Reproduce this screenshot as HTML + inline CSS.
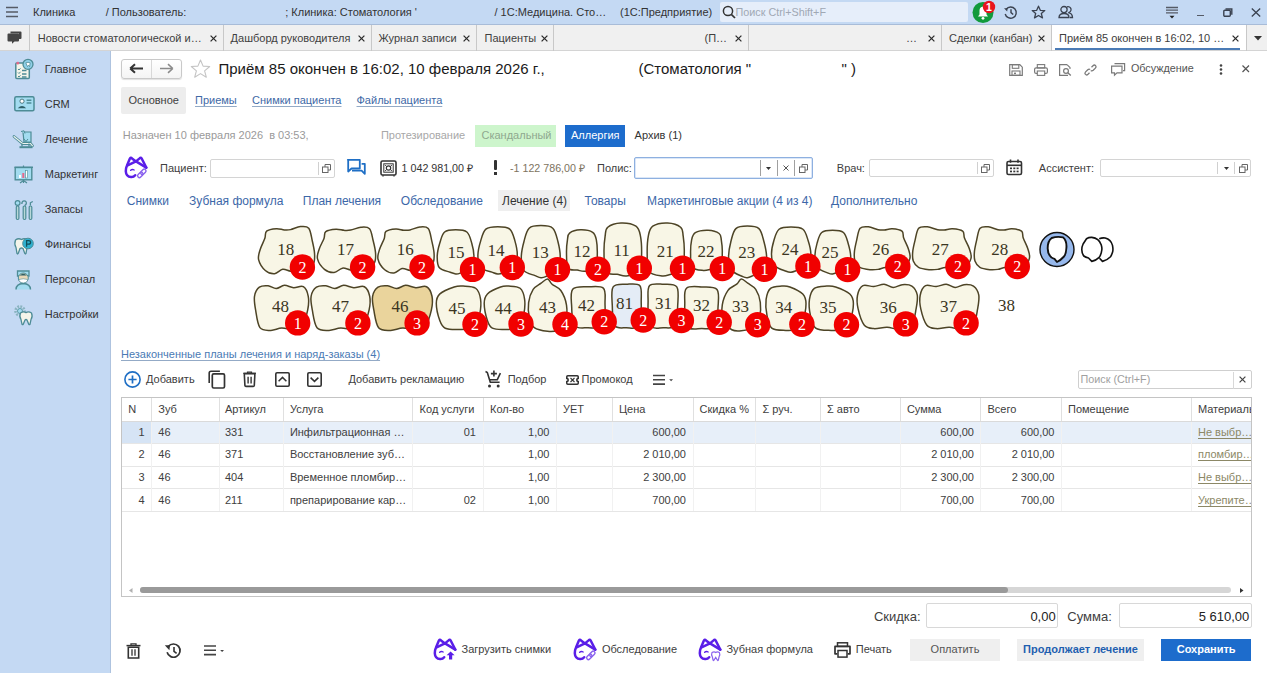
<!DOCTYPE html><html><head><meta charset="utf-8"><style>
html,body{margin:0;padding:0;width:1272px;height:673px;overflow:hidden;background:#fff;position:relative;}
.t{position:absolute;white-space:nowrap;line-height:1;font-family:"Liberation Sans", sans-serif;}
.r{position:absolute;box-sizing:border-box;}
svg.r{overflow:visible}
</style></head><body>
<div class="r" style="left:0.0px;top:0.0px;width:1267.0px;height:25.0px;background:#c4d9f3;border-bottom:1px solid #a8bcd8"></div>
<svg class="r" style="left:5.0px;top:6.0px" width="14" height="12" viewBox="0 0 14 12"><path d="M1 1.5H13M1 6H13M1 10.5H13" stroke="#555b66" stroke-width="1.6"/></svg>
<div class="t " style="left:33.0px;top:7.1px;font-size:11px;color:#333;">Клиника</div>
<div class="t " style="left:105.7px;top:7.1px;font-size:11px;color:#333;">/ Пользователь:</div>
<div class="t " style="left:285.2px;top:7.1px;font-size:11px;color:#333;">; Клиника: Стоматология '</div>
<div class="t " style="left:494.5px;top:7.1px;font-size:11px;color:#333;">/ 1С:Медицина. Сто…</div>
<div class="t " style="left:620.0px;top:7.1px;font-size:11px;color:#333;">(1С:Предприятие)</div>
<div class="r" style="left:719.5px;top:2.0px;width:248.0px;height:20.0px;background:#e6eefa;border-radius:2px"></div>
<svg class="r" style="left:722.0px;top:5.0px" width="14" height="14" viewBox="0 0 14 14"><circle cx="6" cy="6" r="4.6" fill="none" stroke="#333" stroke-width="1.5"/><path d="M9.3 9.3L13 13" stroke="#333" stroke-width="1.7"/></svg>
<div class="t " style="left:735.5px;top:7.2px;font-size:10.8px;color:#a0a8b4;">Поиск Ctrl+Shift+F</div>
<svg class="r" style="left:972.0px;top:1.0px" width="24" height="23" viewBox="0 0 24 23"><circle cx="11" cy="11.5" r="10.5" fill="#119a3c"/><path d="M6 15.5 L7.5 13.5 V9.5 Q7.5 6 11 5.5 Q14.5 6 14.5 9.5 V13.5 L16 15.5Z" fill="#fff"/><circle cx="11" cy="17.3" r="1.4" fill="#fff"/><circle cx="17" cy="6" r="6.2" fill="#e8141e"/><text x="17" y="9.8" font-family="Liberation Sans" font-weight="bold" font-size="10.5" fill="#fff" text-anchor="middle">1</text></svg>
<svg class="r" style="left:1003.0px;top:5.0px" width="15" height="14" viewBox="0 0 15 14"><path d="M3.2 4.2 A5.6 5.6 0 1 1 2.2 9" fill="none" stroke="#3a4250" stroke-width="1.4"/><path d="M1 3.2 L4.6 3.2 L4.2 6.6Z" fill="#3a4250"/><path d="M8 4.3V7.6L10.2 9.6" fill="none" stroke="#3a4250" stroke-width="1.4"/></svg>
<svg class="r" style="left:1031.0px;top:5.0px" width="15" height="14" viewBox="0 0 15 14"><path d="M7.5 1.2 L9.3 5.3 L13.8 5.6 L10.3 8.5 L11.5 12.9 L7.5 10.5 L3.5 12.9 L4.7 8.5 L1.2 5.6 L5.7 5.3Z" fill="none" stroke="#3a4250" stroke-width="1.3" stroke-linejoin="round"/></svg>
<svg class="r" style="left:1058.0px;top:5.0px" width="16" height="14" viewBox="0 0 16 14"><circle cx="6" cy="4.6" r="3.1" fill="none" stroke="#3a4250" stroke-width="1.3"/><path d="M1 12.5 Q1 8.5 6 8.5 Q11 8.5 11 12.5Z" fill="none" stroke="#3a4250" stroke-width="1.3"/><path d="M9 1.8 A3 3 0 1 1 10.2 7.6 Q14.5 8.3 14.5 12.5 H12" fill="none" stroke="#3a4250" stroke-width="1.3"/></svg>
<svg class="r" style="left:1165.0px;top:6.0px" width="14" height="14" viewBox="0 0 14 14"><path d="M1 1.5H13M1 4.2H13M1 6.9H13" stroke="#555b66" stroke-width="1.3"/><path d="M4.5 9.8H9.5L7 12.4Z" fill="#222"/></svg>
<div class="r" style="left:1196.8px;top:14.5px;width:7.0px;height:1.6px;background:#555b66"></div>
<svg class="r" style="left:1223.0px;top:7.5px" width="10" height="9" viewBox="0 0 10 9"><rect x="0.8" y="2.2" width="6.5" height="6" rx="1" fill="none" stroke="#3a4250" stroke-width="1.4"/><path d="M2.5 1 H8.8 V6.8" fill="none" stroke="#3a4250" stroke-width="1.4"/></svg>
<svg class="r" style="left:1250.5px;top:7.5px" width="10" height="9" viewBox="0 0 10 9"><path d="M0.8 0.5L9.2 8.5M9.2 0.5L0.8 8.5" stroke="#3a4250" stroke-width="1.3"/></svg>
<div class="r" style="left:0.0px;top:25.0px;width:1267.0px;height:26.0px;background:#f0f0f0;border-bottom:1px solid #d4d4d4"></div>
<svg class="r" style="left:7.0px;top:31.0px" width="15" height="13" viewBox="0 0 15 13"><path d="M3.5 0.5 H13.5 Q14.5 0.5 14.5 1.5 V7 Q14.5 8 13.5 8 H12 V2.5 H3.5Z" fill="#444"/><path d="M1.5 2.5 H11 Q12 2.5 12 3.5 V9.5 Q12 10.5 11 10.5 H7.5 L5 12.8 V10.5 H1.5 Q0.5 10.5 0.5 9.5 V3.5 Q0.5 2.5 1.5 2.5Z" fill="#444"/></svg>
<div class="r" style="left:29.0px;top:25.0px;width:1.0px;height:26.0px;background:#c8c8c8"></div>
<div class="t " style="left:37.7px;top:32.6px;font-size:11px;color:#404040;">Новости стоматологической и…</div>
<svg class="r" style="left:209.5px;top:34.5px" width="7" height="7" viewBox="0 0 7 7"><path d="M0.6 0.6L6.4 6.4M6.4 0.6L0.6 6.4" stroke="#2a2a2a" stroke-width="1.25"/></svg>
<div class="r" style="left:223.0px;top:25.0px;width:1.0px;height:26.0px;background:#c8c8c8"></div>
<div class="t " style="left:230.6px;top:32.6px;font-size:11px;color:#404040;">Дашборд руководителя</div>
<svg class="r" style="left:357.5px;top:34.5px" width="7" height="7" viewBox="0 0 7 7"><path d="M0.6 0.6L6.4 6.4M6.4 0.6L0.6 6.4" stroke="#2a2a2a" stroke-width="1.25"/></svg>
<div class="r" style="left:371.0px;top:25.0px;width:1.0px;height:26.0px;background:#c8c8c8"></div>
<div class="t " style="left:378.5px;top:32.6px;font-size:11px;color:#404040;">Журнал записи</div>
<svg class="r" style="left:462.5px;top:34.5px" width="7" height="7" viewBox="0 0 7 7"><path d="M0.6 0.6L6.4 6.4M6.4 0.6L0.6 6.4" stroke="#2a2a2a" stroke-width="1.25"/></svg>
<div class="r" style="left:476.0px;top:25.0px;width:1.0px;height:26.0px;background:#c8c8c8"></div>
<div class="t " style="left:484.5px;top:32.6px;font-size:11px;color:#404040;">Пациенты</div>
<svg class="r" style="left:541.0px;top:34.5px" width="7" height="7" viewBox="0 0 7 7"><path d="M0.6 0.6L6.4 6.4M6.4 0.6L0.6 6.4" stroke="#2a2a2a" stroke-width="1.25"/></svg>
<div class="r" style="left:553.0px;top:25.0px;width:1.0px;height:26.0px;background:#c8c8c8"></div>
<div class="t " style="left:704.5px;top:32.6px;font-size:11px;color:#404040;">(П…</div>
<svg class="r" style="left:734.5px;top:34.5px" width="7" height="7" viewBox="0 0 7 7"><path d="M0.6 0.6L6.4 6.4M6.4 0.6L0.6 6.4" stroke="#2a2a2a" stroke-width="1.25"/></svg>
<div class="r" style="left:748.0px;top:25.0px;width:1.0px;height:26.0px;background:#c8c8c8"></div>
<div class="t " style="left:906.0px;top:32.6px;font-size:11px;color:#404040;">…</div>
<svg class="r" style="left:927.5px;top:34.5px" width="7" height="7" viewBox="0 0 7 7"><path d="M0.6 0.6L6.4 6.4M6.4 0.6L0.6 6.4" stroke="#2a2a2a" stroke-width="1.25"/></svg>
<div class="r" style="left:941.0px;top:25.0px;width:1.0px;height:26.0px;background:#c8c8c8"></div>
<div class="t " style="left:949.0px;top:32.6px;font-size:11px;color:#404040;">Сделки (канбан)</div>
<svg class="r" style="left:1037.5px;top:34.5px" width="7" height="7" viewBox="0 0 7 7"><path d="M0.6 0.6L6.4 6.4M6.4 0.6L0.6 6.4" stroke="#2a2a2a" stroke-width="1.25"/></svg>
<div class="r" style="left:1051.0px;top:25.0px;width:1.0px;height:26.0px;background:#c8c8c8"></div>
<div class="r" style="left:1052.0px;top:25.0px;width:193.5px;height:25.0px;background:#fff"></div>
<div class="r" style="left:1055.0px;top:47.5px;width:184.5px;height:2.0px;background:#4b7bb5"></div>
<div class="t " style="left:1059.0px;top:32.6px;font-size:11px;color:#404040;">Приём 85 окончен в 16:02, 10 …</div>
<svg class="r" style="left:1232.0px;top:34.5px" width="7" height="7" viewBox="0 0 7 7"><path d="M0.6 0.6L6.4 6.4M6.4 0.6L0.6 6.4" stroke="#2a2a2a" stroke-width="1.25"/></svg>
<div class="r" style="left:1245.5px;top:25.0px;width:1.0px;height:26.0px;background:#c8c8c8"></div>
<svg class="r" style="left:1254.0px;top:35.5px" width="8" height="5" viewBox="0 0 8 5"><path d="M0 0H8L4 4.5Z" fill="#333"/></svg>
<div class="r" style="left:0.0px;top:51.0px;width:111.0px;height:622.0px;background:#c4d9f3;border-right:1px solid #aec3df"></div>
<div class="t " style="left:44.7px;top:63.6px;font-size:11px;color:#333;">Главное</div>
<div class="t " style="left:44.7px;top:98.6px;font-size:11px;color:#333;">CRM</div>
<div class="t " style="left:44.7px;top:133.6px;font-size:11px;color:#333;">Лечение</div>
<div class="t " style="left:44.7px;top:168.6px;font-size:11px;color:#333;">Маркетинг</div>
<div class="t " style="left:44.7px;top:203.6px;font-size:11px;color:#333;">Запасы</div>
<div class="t " style="left:44.7px;top:238.6px;font-size:11px;color:#333;">Финансы</div>
<div class="t " style="left:44.7px;top:273.6px;font-size:11px;color:#333;">Персонал</div>
<div class="t " style="left:44.7px;top:308.6px;font-size:11px;color:#333;">Настройки</div>
<svg class="r" style="left:15.0px;top:60.5px" width="21" height="21" viewBox="0 0 21 21"><rect x="0.8" y="2" width="13.5" height="15.5" rx="1" fill="#f4f5ea" stroke="#4d8c96" stroke-width="1.5"/><path d="M3 8L4 9L5.5 7.3M3 11.5L4 12.5L5.5 10.8M3 15L4 16L5.5 14.3" fill="none" stroke="#4d8c96" stroke-width="1"/><path d="M7 9.5H11.5M7 13H11.5M7 16H11.5" stroke="#4d8c96" stroke-width="1.3"/><circle cx="2.8" cy="2.2" r="1.4" fill="#e06a8a"/><circle cx="13" cy="3.3" r="5" fill="#8fd0e8" stroke="#4d8c96" stroke-width="1.3"/><path d="M10.8 1.8Q13 0.8 15.2 1.8L14.6 5.6L13.5 4.3L12.5 5.6Z" fill="#fff" stroke="#4d8c96" stroke-width="0.8"/></svg>
<svg class="r" style="left:13.5px;top:96.2px" width="21" height="21" viewBox="0 0 21 21"><rect x="0.8" y="0.8" width="19.2" height="14" rx="1.5" fill="#a3dcf0" stroke="#4d8c96" stroke-width="1.5"/><circle cx="8" cy="5.2" r="2.1" fill="#fff" stroke="#2d5e66" stroke-width="0.8"/><path d="M3.8 12.3Q8 7.6 12.2 12.3Z" fill="#2d5e66"/><path d="M12.6 4.2H17.4M12.6 7H17.4" stroke="#4d8c96" stroke-width="1.4"/></svg>
<svg class="r" style="left:13.0px;top:130.0px" width="21" height="21" viewBox="0 0 21 21"><path d="M1 6.5L9.5 13.5H17.5L19.5 15.8" fill="none" stroke="#4d8c96" stroke-width="2.8" stroke-linecap="round"/><path d="M1 6.5L9.5 13.5H17.5L19.5 15.8" fill="none" stroke="#eef4ee" stroke-width="1.1" stroke-linecap="round"/><path d="M10 2H18V12H11Z" fill="#a3dcf0" stroke="#4d8c96" stroke-width="1.2"/><path d="M8 1.5L11 0.8L12 3.5" fill="#a3dcf0" stroke="#4d8c96" stroke-width="1"/><path d="M11 9L13 11.5L15 9" fill="none" stroke="#4d8c96" stroke-width="1"/><rect x="6.5" y="16.2" width="13" height="2" fill="#4d8c96"/><path d="M9 13.5V16.5M16 13.5V16.5" stroke="#4d8c96" stroke-width="1.3"/></svg>
<svg class="r" style="left:13.5px;top:165.0px" width="21" height="21" viewBox="0 0 21 21"><path d="M0.5 2.3H19" stroke="#4d8c96" stroke-width="1.4"/><rect x="1.2" y="2.5" width="16.6" height="12.3" fill="#a3dcf0" stroke="#4d8c96" stroke-width="1.4"/><rect x="5" y="10" width="2" height="3" fill="#fff"/><rect x="8.3" y="8" width="2" height="5" fill="#e46a8c"/><rect x="11.6" y="5.5" width="2" height="7.5" fill="#fff" stroke="#4d8c96" stroke-width="0.6"/><path d="M9.5 0.5V2.3M9.5 15V18M6 18L9.5 15.5L13 18" fill="none" stroke="#4d8c96" stroke-width="1.2"/></svg>
<svg class="r" style="left:13.5px;top:199.5px" width="21" height="21" viewBox="0 0 21 21"><circle cx="3.6" cy="3" r="2.4" fill="#a3dcf0" stroke="#4d8c96" stroke-width="1.2"/><rect x="2.3" y="6" width="2.6" height="13.5" rx="1.2" fill="#b8d8d8" stroke="#4d8c96" stroke-width="1.2"/><path d="M7.8 4Q8 0.8 10.2 0.9Q12.6 1 12.3 3.5Q12 5 10.6 5.6" fill="none" stroke="#4d8c96" stroke-width="1.3"/><rect x="9.2" y="6" width="2.6" height="13.5" rx="1.2" fill="#b8d8d8" stroke="#4d8c96" stroke-width="1.2"/><path d="M16.4 5.5V2.8L18.8 1.5" fill="none" stroke="#4d8c96" stroke-width="1.3"/><rect x="15.2" y="6" width="2.6" height="13.5" rx="1.2" fill="#b8d8d8" stroke="#4d8c96" stroke-width="1.2"/></svg>
<svg class="r" style="left:13.5px;top:236.5px" width="21" height="21" viewBox="0 0 21 21"><path d="M1.5 3Q4.5 0.8 7.5 2.5Q10.5 0.8 13.5 3Q15 7 13 10.5L12 16.5Q11.4 17.5 10.8 16.5L9 11.5Q7.5 10.5 6 11.5L4.2 16.5Q3.6 17.5 3 16.5L2 10.5Q0 7 1.5 3Z" fill="#f4f5ea" stroke="#4d8c96" stroke-width="1.3"/><circle cx="14" cy="6.5" r="5.3" fill="#2fb1d0" stroke="#4d8c96" stroke-width="1"/><path d="M12.6 9.8V3.6H14.6Q16.6 3.6 16.6 5.4Q16.6 7.2 14.6 7.2H12.6" fill="none" stroke="#10505c" stroke-width="1.3"/></svg>
<svg class="r" style="left:14.0px;top:269.5px" width="21" height="21" viewBox="0 0 21 21"><path d="M2 19.5Q2 14 9.2 13.5Q16.5 14 16.5 19.5" fill="#a3dcf0" stroke="#4d8c96" stroke-width="1.4"/><path d="M3.5 1H15V6H3.5Z" fill="#a3dcf0" stroke="#4d8c96" stroke-width="1.3"/><circle cx="9.3" cy="8" r="5" fill="#e8d8b8" stroke="#4d8c96" stroke-width="1"/><path d="M5.5 5.5Q9.3 2 13 5.5" fill="#2d5e66"/><path d="M5 9.5Q9.3 8 13.5 9.5V11Q9.3 15 5 11Z" fill="#fff" stroke="#4d8c96" stroke-width="0.6"/></svg>
<svg class="r" style="left:14.0px;top:305.0px" width="21" height="21" viewBox="0 0 21 21"><circle cx="6" cy="6" r="4.5" fill="none" stroke="#8ab4c0" stroke-width="2.6" stroke-dasharray="1.8 1.2"/><circle cx="6" cy="6" r="2.5" fill="#a3dcf0" stroke="#4d8c96" stroke-width="0.8"/><path d="M6.5 8Q9.5 6 12 7.6Q14.5 6 17.5 8Q19 11.5 17 14.5L16 19.3Q15.4 20 14.8 19.3L13 15Q12 14 11 15L9.2 19.3Q8.6 20 8 19.3L7 14.5Q5 11.5 6.5 8Z" fill="#f4f5ea" stroke="#4d8c96" stroke-width="1.3"/></svg>
<div class="r" style="left:121.0px;top:58.5px;width:60.5px;height:20.0px;border:1px solid #c9c9c9;border-radius:3px;background:linear-gradient(#fff,#f4f4f4);box-shadow:0 1px 1px rgba(0,0,0,0.12)"></div>
<div class="r" style="left:151.2px;top:59.5px;width:1.0px;height:18.0px;background:#d8d8d8"></div>
<svg class="r" style="left:128.5px;top:63.0px" width="15" height="11" viewBox="0 0 15 11"><path d="M1.2 5.5H14M1.2 5.5L6 1.2M1.2 5.5L6 9.8" fill="none" stroke="#333" stroke-width="2"/></svg>
<svg class="r" style="left:159.0px;top:63.0px" width="15" height="11" viewBox="0 0 15 11"><path d="M13.8 5.5H1M13.8 5.5L9 1.2M13.8 5.5L9 9.8" fill="none" stroke="#8a8a8a" stroke-width="1.6"/></svg>
<svg class="r" style="left:190.0px;top:58.5px" width="21" height="19" viewBox="0 0 21 19"><path d="M10.5 1 L13.1 7.1 L19.7 7.5 L14.6 11.8 L16.3 18.2 L10.5 14.6 L4.7 18.2 L6.4 11.8 L1.3 7.5 L7.9 7.1Z" fill="none" stroke="#c4c4c4" stroke-width="1.1" stroke-linejoin="round"/></svg>
<div class="t " style="left:218.5px;top:60.5px;font-size:15px;color:#1a1a1a;">Приём 85 окончен в 16:02, 10 февраля 2026 г.,</div>
<div class="t " style="left:638.5px;top:60.5px;font-size:15px;color:#1a1a1a;">(Стоматология "</div>
<div class="t " style="left:841.5px;top:60.5px;font-size:15px;color:#1a1a1a;">" )</div>
<svg class="r" style="left:1009.0px;top:63.5px" width="14" height="12" viewBox="0 0 14 12"><path d="M0.7 0.7H10.8L13.3 3.2V11.3H0.7Z" fill="none" stroke="#7a7a7a" stroke-width="1.2"/><rect x="3.3" y="0.7" width="6.5" height="3.6" fill="none" stroke="#7a7a7a" stroke-width="1.1"/><rect x="3" y="7" width="8" height="4.3" fill="none" stroke="#7a7a7a" stroke-width="1.1"/><rect x="5" y="8.6" width="2" height="1.5" fill="#7a7a7a"/></svg>
<svg class="r" style="left:1034.0px;top:63.5px" width="14" height="12" viewBox="0 0 14 12"><rect x="3.3" y="0.6" width="7.4" height="3.4" fill="none" stroke="#7a7a7a" stroke-width="1.1"/><rect x="0.6" y="3.8" width="12.8" height="5.6" rx="1.5" fill="none" stroke="#7a7a7a" stroke-width="1.2"/><rect x="3.3" y="7" width="7.4" height="4.4" fill="#fff" stroke="#7a7a7a" stroke-width="1.1"/></svg>
<svg class="r" style="left:1059.0px;top:63.5px" width="13" height="12" viewBox="0 0 13 12"><path d="M8 0.6H0.6V11.4H9" fill="none" stroke="#7a7a7a" stroke-width="1.2"/><path d="M8 0.6 L11 3.6 V5" fill="none" stroke="#7a7a7a" stroke-width="1.1"/><circle cx="7" cy="7" r="2.4" fill="none" stroke="#7a7a7a" stroke-width="1.2"/><path d="M8.8 8.8L11.8 11.6" stroke="#7a7a7a" stroke-width="1.4"/></svg>
<svg class="r" style="left:1083.5px;top:63.5px" width="13" height="12" viewBox="0 0 13 12"><path d="M5.5 8.8 L4 10.3 Q2.6 11.6 1.4 10.4 Q0.3 9.2 1.6 7.9 L3.8 5.7 Q5 4.6 6.2 5.6" fill="none" stroke="#7a7a7a" stroke-width="1.3"/><path d="M7.5 3.2 L9 1.7 Q10.4 0.4 11.6 1.6 Q12.7 2.8 11.4 4.1 L9.2 6.3 Q8 7.4 6.8 6.4" fill="none" stroke="#7a7a7a" stroke-width="1.3"/></svg>
<svg class="r" style="left:1111.0px;top:63.0px" width="15" height="13" viewBox="0 0 15 13"><path d="M3.5 0.6H13.6V7.6H12" fill="none" stroke="#7a7a7a" stroke-width="1.2"/><path d="M0.6 3.2H11V9.8H6L3.5 12.2V9.8H0.6Z" fill="#fff" stroke="#7a7a7a" stroke-width="1.2"/></svg>
<div class="t " style="left:1130.9px;top:63.1px;font-size:10.8px;color:#555;">Обсуждение</div>
<svg class="r" style="left:1218.5px;top:63.5px" width="4" height="11" viewBox="0 0 4 11"><circle cx="2" cy="1.5" r="1.3" fill="#444"/><circle cx="2" cy="5.5" r="1.3" fill="#444"/><circle cx="2" cy="9.5" r="1.3" fill="#444"/></svg>
<svg class="r" style="left:1241.5px;top:65.0px" width="7.5" height="7.5" viewBox="0 0 7.5 7.5"><path d="M0.5 0.5L7 7M7 0.5L0.5 7" stroke="#555" stroke-width="1.2"/></svg>
<div class="r" style="left:121.0px;top:87.0px;width:64.5px;height:27.0px;background:#ededed;border-radius:2px"></div>
<div class="t " style="left:128.5px;top:95.1px;font-size:11px;color:#404040;">Основное</div>
<div class="t " style="left:195.0px;top:95.1px;font-size:11px;color:#4169a6;text-decoration:underline;text-underline-offset:2px;text-decoration-color:#93aac6">Приемы</div>
<div class="t " style="left:252.0px;top:95.1px;font-size:11px;color:#4169a6;text-decoration:underline;text-underline-offset:2px;text-decoration-color:#93aac6">Снимки пациента</div>
<div class="t " style="left:356.5px;top:95.1px;font-size:11px;color:#4169a6;text-decoration:underline;text-underline-offset:2px;text-decoration-color:#93aac6">Файлы пациента</div>
<div class="t " style="left:122.7px;top:130.3px;font-size:11px;color:#9a9a9a;">Назначен 10 февраля 2026&nbsp; в 03:53,</div>
<div class="t " style="left:380.9px;top:130.3px;font-size:11px;color:#a8a8a8;">Протезирование</div>
<div class="r" style="left:475.0px;top:124.5px;width:81.2px;height:22.0px;background:#cdf5cc"></div>
<div class="t " style="left:481.5px;top:130.3px;font-size:11px;color:#8fa88f;">Скандальный</div>
<div class="r" style="left:564.6px;top:124.5px;width:60.1px;height:22.0px;background:#1d6ccc"></div>
<div class="t " style="left:571.0px;top:130.3px;font-size:11px;color:#fff;">Аллергия</div>
<div class="t " style="left:634.6px;top:130.3px;font-size:11px;color:#333;">Архив (1)</div>
<svg class="r" style="left:120.0px;top:152.0px" width="30" height="28" viewBox="0 0 30 28"><path d="M15.2 23.2 Q13.5 25.3 11.1 25 Q6 24.6 5.8 19.2 Q5.8 16.2 6.7 14.2 L9.8 6.8 Q10.7 5 12 6.4 L16 9.4 L19.6 6.4 Q20.9 5 21.8 6.8 L26.3 15.6" fill="none" stroke="#5a1ee8" stroke-width="2.5" stroke-linejoin="round" stroke-linecap="round"/><path d="M7.6 13.3 L16 9.4 L26.3 15.6" fill="none" stroke="#5a1ee8" stroke-width="2.5" stroke-linejoin="round" stroke-linecap="round"/><path d="M10.6 18.3 Q12.3 16.9 14.2 18" fill="none" stroke="#5a1ee8" stroke-width="1.3" stroke-linecap="round"/><g fill="none" stroke="#8a62ee" stroke-width="1.4" transform="rotate(-45 21.8 21.4)"><rect x="16.6" y="19.6" width="6.2" height="3.6" rx="1.8"/><rect x="20.8" y="19.6" width="6.2" height="3.6" rx="1.8"/></g></svg>
<div class="t " style="left:160.0px;top:162.6px;font-size:11px;color:#404040;">Пациент:</div>
<div class="r" style="left:210.0px;top:159.0px;width:125.0px;height:18.5px;border:1px solid #d4d4d4;background:#fff;border-radius:2px"></div>
<div class="r" style="left:317.7px;top:162.0px;width:1.0px;height:12.5px;background:#d0d0d0"></div>
<svg class="r" style="left:322.2px;top:163.8px" width="9" height="9" viewBox="0 0 9 9"><rect x="0.5" y="3" width="5.5" height="5.5" fill="#fff" stroke="#666" stroke-width="1"/><path d="M3 3V0.5H8.5V6H6" fill="none" stroke="#666" stroke-width="1"/></svg>
<svg class="r" style="left:346.5px;top:159.0px" width="19" height="17" viewBox="0 0 19 17"><path d="M0.8 0.8H12.8V9.5H4.5L1.2 12.5V0.8Z" fill="none" stroke="#1f6fc5" stroke-width="1.8" stroke-linejoin="round"/><path d="M5 11.6H14.6L17.8 14.8V4.8H14.6" fill="none" stroke="#1f6fc5" stroke-width="1.8" stroke-linejoin="round"/></svg>
<svg class="r" style="left:379.5px;top:159.5px" width="17" height="17" viewBox="0 0 17 17"><rect x="1" y="1" width="15" height="14" rx="1.5" fill="none" stroke="#333" stroke-width="1.6"/><rect x="3.8" y="3.8" width="9.4" height="8.4" fill="none" stroke="#333" stroke-width="1"/><circle cx="8.5" cy="8" r="2.2" fill="none" stroke="#333" stroke-width="1.2"/><path d="M5 5L6.8 6.6M12 5L10.2 6.6M5 11L6.8 9.4M12 11L10.2 9.4" stroke="#333" stroke-width="0.9"/><path d="M3 15.2V16.5M14 15.2V16.5" stroke="#333" stroke-width="1.4"/></svg>
<div class="t " style="left:401.6px;top:162.8px;font-size:10.7px;color:#333;">1 042 981,00 ₽</div>
<div class="r" style="left:494.3px;top:160.0px;width:3.2px;height:10.0px;background:#333;border-radius:1px"></div>
<div class="r" style="left:494.3px;top:172.0px;width:3.2px;height:3.0px;background:#333"></div>
<div class="t " style="left:510.0px;top:162.8px;font-size:10.7px;color:#7d7360;">-1 122 786,00 ₽</div>
<div class="t " style="left:597.0px;top:162.6px;font-size:11px;color:#404040;">Полис:</div>
<div class="r" style="left:634.3px;top:157.0px;width:179.0px;height:22.3px;border:1px solid #8eb0e0;background:#fff;border-radius:2px;box-shadow:inset 0 0 0 0.5px #b8cff0"></div>
<div class="r" style="left:759.8px;top:160.0px;width:1.0px;height:16.3px;background:#a0a0a0"></div>
<svg class="r" style="left:766.3px;top:167.0px" width="5" height="3.5" viewBox="0 0 5 3.5"><path d="M0 0H5L2.5 3Z" fill="#333"/></svg>
<div class="r" style="left:777.0px;top:160.0px;width:1.0px;height:16.3px;background:#a0a0a0"></div>
<svg class="r" style="left:782.8px;top:165.2px" width="6" height="6" viewBox="0 0 6 6"><path d="M0.5 0.5L5.5 5.5M5.5 0.5L0.5 5.5" stroke="#555" stroke-width="1"/></svg>
<div class="r" style="left:794.3px;top:160.0px;width:1.0px;height:16.3px;background:#a0a0a0"></div>
<svg class="r" style="left:798.8px;top:163.7px" width="9" height="9" viewBox="0 0 9 9"><rect x="0.5" y="3" width="5.5" height="5.5" fill="#fff" stroke="#666" stroke-width="1"/><path d="M3 3V0.5H8.5V6H6" fill="none" stroke="#666" stroke-width="1"/></svg>
<div class="t " style="left:836.8px;top:162.6px;font-size:11px;color:#404040;">Врач:</div>
<div class="r" style="left:868.5px;top:158.7px;width:125.5px;height:18.8px;border:1px solid #d4d4d4;background:#fff;border-radius:2px"></div>
<div class="r" style="left:976.6px;top:161.7px;width:1.0px;height:12.8px;background:#d0d0d0"></div>
<svg class="r" style="left:981.1px;top:163.6px" width="9" height="9" viewBox="0 0 9 9"><rect x="0.5" y="3" width="5.5" height="5.5" fill="#fff" stroke="#666" stroke-width="1"/><path d="M3 3V0.5H8.5V6H6" fill="none" stroke="#666" stroke-width="1"/></svg>
<svg class="r" style="left:1006.0px;top:159.3px" width="17" height="17" viewBox="0 0 17 17"><rect x="1" y="2.5" width="14.5" height="13" rx="1.5" fill="none" stroke="#333" stroke-width="1.6"/><path d="M1 6.3H15.5" stroke="#333" stroke-width="1.6"/><path d="M4.5 0.5V3.8M12 0.5V3.8" stroke="#333" stroke-width="1.6"/><g fill="#333"><rect x="4" y="8.5" width="2" height="1.7"/><rect x="7.3" y="8.5" width="2" height="1.7"/><rect x="10.6" y="8.5" width="2" height="1.7"/><rect x="4" y="11.6" width="2" height="1.7"/><rect x="7.3" y="11.6" width="2" height="1.7"/><rect x="10.6" y="11.6" width="2" height="1.7"/></g></svg>
<div class="t " style="left:1038.8px;top:162.6px;font-size:11px;color:#404040;">Ассистент:</div>
<div class="r" style="left:1099.7px;top:158.7px;width:151.6px;height:18.8px;border:1px solid #d4d4d4;background:#fff;border-radius:2px"></div>
<div class="r" style="left:1217.0px;top:161.7px;width:1.0px;height:12.8px;background:#d0d0d0"></div>
<svg class="r" style="left:1223.5px;top:166.9px" width="5" height="3.5" viewBox="0 0 5 3.5"><path d="M0 0H5L2.5 3Z" fill="#333"/></svg>
<div class="r" style="left:1234.0px;top:161.7px;width:1.0px;height:12.8px;background:#d0d0d0"></div>
<svg class="r" style="left:1238.5px;top:163.6px" width="9" height="9" viewBox="0 0 9 9"><rect x="0.5" y="3" width="5.5" height="5.5" fill="#fff" stroke="#666" stroke-width="1"/><path d="M3 3V0.5H8.5V6H6" fill="none" stroke="#666" stroke-width="1"/></svg>
<div class="t " style="left:126.8px;top:194.6px;font-size:12px;color:#3c67a8;">Снимки</div>
<div class="t " style="left:189.0px;top:194.6px;font-size:12px;color:#3c67a8;">Зубная формула</div>
<div class="t " style="left:302.8px;top:194.6px;font-size:12px;color:#3c67a8;">План лечения</div>
<div class="t " style="left:400.8px;top:194.6px;font-size:12px;color:#3c67a8;">Обследование</div>
<div class="r" style="left:498.0px;top:189.7px;width:72.0px;height:21.7px;background:#efefef"></div>
<div class="t " style="left:502.0px;top:194.6px;font-size:12px;color:#333;">Лечение (4)</div>
<div class="t " style="left:584.5px;top:194.6px;font-size:12px;color:#3c67a8;">Товары</div>
<div class="t " style="left:647.0px;top:194.6px;font-size:12px;color:#3c67a8;">Маркетинговые акции (4 из 4)</div>
<div class="t " style="left:831.0px;top:194.6px;font-size:12px;color:#3c67a8;">Дополнительно</div>
<svg class="r" style="left:0;top:0" width="1272" height="673" viewBox="0 0 1272 673"><path d="M266.59 231.13 C268.52 229.52 273.48 228.88 276.43 228.68 C279.39 228.47 281.96 229.75 284.31 229.90 C286.67 230.06 287.89 230.17 290.57 229.62 C293.26 229.07 297.39 226.84 300.41 226.60 C303.44 226.36 306.77 225.80 308.74 228.16 C310.72 230.52 311.30 236.65 312.26 240.76 C313.22 244.87 314.22 249.22 314.50 252.84 C314.78 256.46 314.87 259.77 313.94 262.47 C313.01 265.18 311.43 267.59 308.91 269.08 C306.39 270.57 301.90 271.09 298.85 271.44 C295.79 271.79 293.28 271.52 290.57 271.16 C287.87 270.79 285.30 268.83 282.64 269.27 C279.97 269.71 277.48 273.60 274.59 273.80 C271.70 274.00 267.97 272.86 265.31 270.50 C262.64 268.14 259.44 263.18 258.60 259.64 C257.76 256.10 259.23 252.80 260.28 249.26 C261.32 245.71 263.81 241.37 264.86 238.35 C265.91 235.33 264.67 232.74 266.59 231.13Z" fill="#f8f6e6" stroke="#4d4426" stroke-width="1.5"/><path d="M325.79 231.55 C327.79 230.00 332.94 229.39 336.00 229.19 C339.07 229.00 341.73 230.22 344.18 230.37 C346.63 230.52 347.89 230.63 350.68 230.10 C353.46 229.57 357.74 227.43 360.88 227.20 C364.03 226.97 367.48 226.43 369.53 228.69 C371.58 230.96 372.18 236.84 373.18 240.79 C374.18 244.74 375.21 248.91 375.50 252.39 C375.79 255.86 375.89 259.03 374.92 261.63 C373.95 264.23 372.31 266.54 369.70 267.97 C367.09 269.40 362.43 269.90 359.26 270.24 C356.09 270.57 353.48 270.31 350.68 269.96 C347.87 269.62 345.20 267.73 342.44 268.15 C339.68 268.57 337.08 272.30 334.09 272.50 C331.09 272.70 327.22 271.59 324.46 269.33 C321.70 267.06 318.37 262.31 317.50 258.91 C316.63 255.51 318.16 252.35 319.24 248.94 C320.32 245.54 322.90 241.38 324.00 238.48 C325.09 235.58 323.79 233.10 325.79 231.55Z" fill="#f8f6e6" stroke="#4d4426" stroke-width="1.5"/><path d="M386.01 231.42 C387.94 229.84 392.91 229.22 395.86 229.02 C398.82 228.82 401.40 230.07 403.76 230.22 C406.12 230.37 407.34 230.48 410.03 229.94 C412.72 229.41 416.85 227.24 419.89 227.00 C422.92 226.76 426.25 226.22 428.23 228.52 C430.21 230.82 430.80 236.79 431.76 240.80 C432.72 244.81 433.72 249.05 434.00 252.58 C434.28 256.10 434.37 259.32 433.44 261.96 C432.51 264.60 430.92 266.94 428.40 268.40 C425.88 269.86 421.38 270.36 418.32 270.70 C415.26 271.04 412.74 270.78 410.03 270.42 C407.33 270.07 404.75 268.15 402.08 268.58 C399.41 269.01 396.91 272.80 394.02 273.00 C391.12 273.20 387.39 272.08 384.72 269.78 C382.05 267.48 378.84 262.65 378.00 259.20 C377.16 255.75 378.63 252.54 379.68 249.08 C380.73 245.62 383.22 241.40 384.27 238.45 C385.33 235.51 384.08 232.99 386.01 231.42Z" fill="#f8f6e6" stroke="#4d4426" stroke-width="1.5"/><path d="M444.62 232.01 C447.28 229.80 452.04 229.80 455.75 229.80 C459.46 229.80 464.22 229.80 466.88 232.01 C469.54 234.22 470.53 239.01 471.70 243.06 C472.88 247.11 473.99 252.27 473.93 256.32 C473.87 260.37 473.62 264.57 471.33 267.37 C469.04 270.17 462.80 272.01 460.20 273.12 C457.61 274.22 457.42 274.15 455.75 274.00 C454.08 273.85 452.91 273.26 450.19 272.23 C447.46 271.20 441.59 270.46 439.43 267.81 C437.26 265.16 437.14 260.45 437.20 256.32 C437.26 252.19 438.56 247.11 439.80 243.06 C441.03 239.01 441.96 234.22 444.62 232.01Z" fill="#f8f6e6" stroke="#4d4426" stroke-width="1.5"/><path d="M485.86 229.06 C488.71 226.70 493.82 226.70 497.80 226.70 C501.78 226.70 506.89 226.70 509.74 229.06 C512.59 231.43 513.65 236.55 514.91 240.89 C516.17 245.23 517.37 250.74 517.30 255.08 C517.24 259.42 516.97 263.91 514.52 266.90 C512.06 269.90 505.36 271.87 502.58 273.05 C499.79 274.24 499.59 274.16 497.80 274.00 C496.01 273.84 494.75 273.21 491.83 272.11 C488.91 271.00 482.61 270.22 480.29 267.38 C477.97 264.54 477.83 259.49 477.90 255.08 C477.97 250.67 479.36 245.23 480.69 240.89 C482.01 236.55 483.01 231.43 485.86 229.06Z" fill="#f8f6e6" stroke="#4d4426" stroke-width="1.5"/><path d="M529.16 228.20 C531.98 225.60 537.02 225.60 540.95 225.60 C544.88 225.60 549.92 225.60 552.74 228.20 C555.56 230.81 556.60 236.45 557.85 241.23 C559.09 246.01 560.27 252.08 560.21 256.86 C560.14 261.64 559.88 266.59 557.46 269.88 C555.03 273.18 548.42 275.36 545.67 276.66 C542.91 277.96 542.72 277.87 540.95 277.70 C539.18 277.53 537.94 276.83 535.05 275.62 C532.17 274.40 525.95 273.53 523.66 270.41 C521.37 267.28 521.23 261.72 521.30 256.86 C521.37 252.00 522.74 246.01 524.05 241.23 C525.36 236.45 526.34 230.81 529.16 228.20Z" fill="#f8f6e6" stroke="#4d4426" stroke-width="1.5"/><path d="M569.58 233.12 C571.74 231.39 576.51 229.94 580.36 229.80 C584.21 229.66 590.01 230.56 592.68 232.29 C595.35 234.02 595.61 236.44 596.38 240.18 C597.15 243.91 597.40 250.07 597.30 254.70 C597.20 259.33 597.81 265.21 595.76 267.98 C593.71 270.75 588.06 270.95 584.98 271.30 C581.90 271.65 580.10 270.61 577.28 270.06 C574.46 269.50 569.84 270.88 568.04 267.98 C566.24 265.08 566.60 257.26 566.50 252.62 C566.40 247.99 566.91 243.43 567.42 240.18 C567.94 236.92 567.42 234.85 569.58 233.12Z" fill="#f8f6e6" stroke="#4d4426" stroke-width="1.5"/><path d="M607.76 227.23 C610.39 225.03 616.22 223.18 620.92 223.00 C625.62 222.82 632.70 223.97 635.96 226.17 C639.22 228.38 639.53 231.46 640.47 236.22 C641.41 240.99 641.73 248.83 641.60 254.74 C641.47 260.65 642.23 268.14 639.72 271.67 C637.21 275.19 630.32 275.46 626.56 275.90 C622.80 276.34 620.61 275.02 617.16 274.31 C613.71 273.61 608.07 275.37 605.88 271.67 C603.69 267.97 604.13 258.00 604.00 252.09 C603.87 246.19 604.50 240.37 605.13 236.22 C605.75 232.08 605.13 229.44 607.76 227.23Z" fill="#f8f6e6" stroke="#4d4426" stroke-width="1.5"/><path d="M683.19 236.22 C683.81 240.37 684.42 246.19 684.30 252.09 C684.18 258.00 684.61 267.97 682.44 271.67 C680.28 275.37 674.72 273.61 671.31 274.31 C667.91 275.02 665.75 276.34 662.04 275.90 C658.33 275.46 651.53 275.19 649.06 271.67 C646.58 268.14 647.32 260.65 647.20 254.74 C647.08 248.83 647.39 240.99 648.31 236.22 C649.24 231.46 649.55 228.38 652.76 226.17 C655.98 223.97 662.97 222.82 667.61 223.00 C672.24 223.18 677.99 225.03 680.59 227.23 C683.19 229.44 682.57 232.08 683.19 236.22Z" fill="#f8f6e6" stroke="#4d4426" stroke-width="1.5"/><path d="M721.35 240.32 C721.88 243.47 722.41 247.88 722.30 252.35 C722.19 256.83 722.56 264.38 720.71 267.19 C718.87 270.00 714.11 268.66 711.20 269.20 C708.30 269.73 706.45 270.73 703.28 270.40 C700.11 270.07 694.30 269.87 692.19 267.19 C690.07 264.52 690.71 258.84 690.60 254.36 C690.49 249.88 690.76 243.93 691.55 240.32 C692.34 236.72 692.61 234.38 695.36 232.71 C698.10 231.04 704.07 230.17 708.03 230.30 C712.00 230.43 716.91 231.84 719.13 233.51 C721.35 235.18 720.82 237.18 721.35 240.32Z" fill="#f8f6e6" stroke="#4d4426" stroke-width="1.5"/><path d="M763.91 241.51 C765.19 246.25 766.54 252.19 766.60 257.02 C766.66 261.85 766.54 267.36 764.30 270.46 C762.06 273.56 755.98 274.43 753.16 275.63 C750.34 276.84 749.13 277.53 747.40 277.70 C745.67 277.87 745.48 277.96 742.79 276.67 C740.10 275.37 733.64 273.22 731.27 269.94 C728.90 266.67 728.65 261.76 728.58 257.02 C728.52 252.28 729.67 246.25 730.89 241.51 C732.10 236.77 733.13 231.17 735.88 228.59 C738.63 226.00 743.56 226.00 747.40 226.00 C751.24 226.00 756.17 226.00 758.92 228.59 C761.67 231.17 762.63 236.77 763.91 241.51Z" fill="#f8f6e6" stroke="#4d4426" stroke-width="1.5"/><path d="M808.11 240.56 C809.44 244.70 810.83 249.90 810.90 254.12 C810.97 258.34 810.83 263.16 808.51 265.87 C806.19 268.58 799.89 269.34 796.97 270.39 C794.05 271.45 792.79 272.05 791.00 272.20 C789.21 272.35 789.01 272.43 786.22 271.30 C783.44 270.17 776.74 268.28 774.28 265.42 C771.83 262.56 771.56 258.26 771.50 254.12 C771.43 249.98 772.63 244.70 773.89 240.56 C775.15 236.42 776.21 231.52 779.06 229.26 C781.91 227.00 787.02 227.00 791.00 227.00 C794.98 227.00 800.09 227.00 802.94 229.26 C805.79 231.52 806.79 236.42 808.11 240.56Z" fill="#f8f6e6" stroke="#4d4426" stroke-width="1.5"/><path d="M848.17 243.41 C849.37 247.42 850.64 252.44 850.70 256.52 C850.76 260.60 850.64 265.26 848.53 267.88 C846.42 270.50 840.68 271.23 838.03 272.25 C835.38 273.27 834.23 273.85 832.60 274.00 C830.97 274.15 830.79 274.22 828.26 273.13 C825.72 272.03 819.63 270.21 817.40 267.44 C815.16 264.68 814.92 260.53 814.86 256.52 C814.80 252.51 815.89 247.42 817.03 243.41 C818.18 239.40 819.15 234.67 821.74 232.49 C824.33 230.30 828.98 230.30 832.60 230.30 C836.22 230.30 840.87 230.30 843.46 232.49 C846.05 234.67 846.96 239.40 848.17 243.41Z" fill="#f8f6e6" stroke="#4d4426" stroke-width="1.5"/><path d="M903.68 238.03 C904.73 240.92 907.20 245.06 908.24 248.45 C909.27 251.84 910.73 254.99 909.90 258.37 C909.07 261.75 905.89 266.49 903.24 268.74 C900.59 271.00 896.89 272.10 894.03 271.90 C891.16 271.70 888.68 267.99 886.03 267.57 C883.39 267.15 880.84 269.03 878.15 269.37 C875.47 269.72 872.97 269.98 869.94 269.64 C866.91 269.31 862.45 268.82 859.95 267.39 C857.45 265.96 855.88 263.66 854.95 261.08 C854.03 258.49 854.12 255.33 854.40 251.88 C854.68 248.42 855.67 244.26 856.62 240.33 C857.57 236.40 858.16 230.54 860.12 228.29 C862.08 226.03 865.38 226.57 868.39 226.80 C871.39 227.03 875.49 229.16 878.15 229.69 C880.82 230.21 882.03 230.11 884.37 229.96 C886.71 229.81 889.26 228.59 892.20 228.78 C895.13 228.98 900.05 229.59 901.96 231.13 C903.88 232.67 902.64 235.14 903.68 238.03Z" fill="#f8f6e6" stroke="#4d4426" stroke-width="1.5"/><path d="M964.47 238.03 C965.57 240.92 968.16 245.06 969.25 248.45 C970.34 251.84 971.87 254.99 971.00 258.37 C970.13 261.75 966.78 266.49 964.00 268.74 C961.23 271.00 957.34 272.10 954.33 271.90 C951.31 271.70 948.71 267.99 945.93 267.57 C943.15 267.15 940.47 269.03 937.65 269.37 C934.83 269.72 932.21 269.98 929.02 269.64 C925.84 269.31 921.15 268.82 918.53 267.39 C915.91 265.96 914.25 263.66 913.28 261.08 C912.31 258.49 912.41 255.33 912.70 251.88 C912.99 248.42 914.03 244.26 915.03 240.33 C916.03 236.40 916.64 230.54 918.70 228.29 C920.76 226.03 924.23 226.57 927.39 226.80 C930.55 227.03 934.85 229.16 937.65 229.69 C940.45 230.21 941.72 230.11 944.18 229.96 C946.64 229.81 949.32 228.59 952.40 228.78 C955.48 228.98 960.65 229.59 962.66 231.13 C964.67 232.67 963.37 235.14 964.47 238.03Z" fill="#f8f6e6" stroke="#4d4426" stroke-width="1.5"/><path d="M1023.24 238.03 C1024.28 240.92 1026.72 245.06 1027.75 248.45 C1028.78 251.84 1030.23 254.99 1029.40 258.37 C1028.58 261.75 1025.42 266.49 1022.80 268.74 C1020.18 271.00 1016.51 272.10 1013.67 271.90 C1010.83 271.70 1008.37 267.99 1005.75 267.57 C1003.13 267.15 1000.60 269.03 997.94 269.37 C995.28 269.72 992.81 269.98 989.80 269.64 C986.79 269.31 982.38 268.82 979.90 267.39 C977.42 265.96 975.87 263.66 974.95 261.08 C974.03 258.49 974.12 255.33 974.40 251.88 C974.67 248.42 975.66 244.26 976.60 240.33 C977.54 236.40 978.12 230.54 980.06 228.29 C982.01 226.03 985.28 226.57 988.26 226.80 C991.24 227.03 995.30 229.16 997.94 229.69 C1000.58 230.21 1001.78 230.11 1004.10 229.96 C1006.42 229.81 1008.95 228.59 1011.86 228.78 C1014.76 228.98 1019.64 229.59 1021.54 231.13 C1023.43 232.67 1022.20 235.14 1023.24 238.03Z" fill="#f8f6e6" stroke="#4d4426" stroke-width="1.5"/><path d="M259.39 287.17 C261.65 285.43 265.27 285.58 268.07 285.81 C270.88 286.04 273.50 288.62 276.22 288.54 C278.94 288.46 281.47 285.51 284.37 285.35 C287.26 285.20 290.43 287.40 293.60 287.63 C296.76 287.86 300.93 285.28 303.37 286.72 C305.81 288.16 307.53 292.41 308.26 296.27 C308.98 300.14 308.71 305.00 307.71 309.92 C306.72 314.85 304.64 322.59 302.28 325.85 C299.93 329.11 297.04 329.11 293.60 329.49 C290.16 329.87 285.45 327.97 281.65 328.12 C277.85 328.28 274.41 330.48 270.79 330.40 C267.17 330.32 262.46 331.08 259.93 327.67 C257.40 324.26 256.49 315.16 255.59 309.92 C254.68 304.69 253.87 300.07 254.50 296.27 C255.13 292.48 257.12 288.92 259.39 287.17Z" fill="#f8f6e6" stroke="#4d4426" stroke-width="1.5"/><path d="M316.43 287.17 C318.89 285.43 322.84 285.58 325.90 285.81 C328.96 286.04 331.82 288.62 334.78 288.54 C337.74 288.46 340.50 285.51 343.66 285.35 C346.82 285.20 350.27 287.40 353.72 287.63 C357.18 287.86 361.72 285.28 364.38 286.72 C367.04 288.16 368.92 292.41 369.71 296.27 C370.50 300.14 370.20 305.00 369.12 309.92 C368.03 314.85 365.76 322.59 363.20 325.85 C360.63 329.11 357.47 329.11 353.72 329.49 C349.97 329.87 344.84 327.97 340.70 328.12 C336.56 328.28 332.81 330.48 328.86 330.40 C324.91 330.32 319.78 331.08 317.02 327.67 C314.26 324.26 313.27 315.16 312.28 309.92 C311.30 304.69 310.41 300.07 311.10 296.27 C311.79 292.48 313.96 288.92 316.43 287.17Z" fill="#f8f6e6" stroke="#4d4426" stroke-width="1.5"/><path d="M378.00 287.17 C380.50 285.43 384.50 285.58 387.60 285.81 C390.70 286.04 393.60 288.62 396.60 288.54 C399.60 288.46 402.40 285.51 405.60 285.35 C408.80 285.20 412.30 287.40 415.80 287.63 C419.30 287.86 423.90 285.28 426.60 286.72 C429.30 288.16 431.20 292.41 432.00 296.27 C432.80 300.14 432.50 305.00 431.40 309.92 C430.30 314.85 428.00 322.59 425.40 325.85 C422.80 329.11 419.60 329.11 415.80 329.49 C412.00 329.87 406.80 327.97 402.60 328.12 C398.40 328.28 394.60 330.48 390.60 330.40 C386.60 330.32 381.40 331.08 378.60 327.67 C375.80 324.26 374.80 315.16 373.80 309.92 C372.80 304.69 371.90 300.07 372.60 296.27 C373.30 292.48 375.50 288.92 378.00 287.17Z" fill="#ead49c" stroke="#4d4426" stroke-width="1.5"/><path d="M439.88 293.91 C442.86 291.16 450.31 288.27 454.18 286.97 C458.05 285.67 459.54 285.88 463.12 286.10 C466.70 286.32 472.73 286.10 475.64 288.27 C478.54 290.44 479.88 294.78 480.55 299.12 C481.22 303.46 480.70 309.61 479.66 314.31 C478.62 319.01 477.80 324.80 474.30 327.33 C470.79 329.86 463.49 329.36 458.65 329.50 C453.81 329.64 448.37 329.64 445.24 328.20 C442.11 326.75 441.37 324.94 439.88 320.82 C438.39 316.70 436.30 307.94 436.30 303.46 C436.30 298.98 436.90 296.66 439.88 293.91Z" fill="#f8f6e6" stroke="#4d4426" stroke-width="1.5"/><path d="M487.46 293.91 C490.18 291.16 496.98 288.27 500.52 286.97 C504.06 285.67 505.42 285.88 508.68 286.10 C511.94 286.32 517.45 286.10 520.10 288.27 C522.76 290.44 523.98 294.78 524.59 299.12 C525.20 303.46 524.73 309.61 523.78 314.31 C522.82 319.01 522.08 324.80 518.88 327.33 C515.68 329.86 509.02 329.36 504.60 329.50 C500.18 329.64 495.22 329.64 492.36 328.20 C489.50 326.75 488.82 324.94 487.46 320.82 C486.10 316.70 484.20 307.94 484.20 303.46 C484.20 298.98 484.74 296.66 487.46 293.91Z" fill="#f8f6e6" stroke="#4d4426" stroke-width="1.5"/><path d="M528.60 302.54 C529.23 297.74 531.06 292.69 533.15 289.46 C535.23 286.23 538.71 284.93 541.11 283.18 C543.51 281.44 545.72 278.83 547.55 279.00 C549.38 279.17 549.89 282.31 552.10 284.23 C554.31 286.15 558.41 287.02 560.82 290.51 C563.22 293.99 565.74 300.09 566.50 305.15 C567.26 310.21 566.94 316.66 565.36 320.84 C563.78 325.02 559.99 328.51 557.02 330.25 C554.06 332.00 551.34 331.74 547.55 331.30 C543.76 330.86 537.32 329.82 534.28 327.64 C531.25 325.46 530.31 322.41 529.36 318.23 C528.41 314.04 527.97 307.33 528.60 302.54Z" fill="#f8f6e6" stroke="#4d4426" stroke-width="1.5"/><path d="M572.70 289.34 C575.42 286.00 582.90 287.04 588.00 286.83 C593.10 286.63 600.47 285.44 603.30 288.08 C606.13 290.73 605.00 296.43 605.00 302.68 C605.00 308.94 606.13 321.44 603.30 325.62 C600.47 329.79 592.82 327.70 588.00 327.70 C583.18 327.70 577.12 329.09 574.40 325.62 C571.68 322.14 571.96 312.90 571.68 306.85 C571.40 300.80 569.98 292.67 572.70 289.34Z" fill="#f8f6e6" stroke="#4d4426" stroke-width="1.5"/><path d="M613.18 286.94 C615.54 283.40 622.03 284.51 626.45 284.29 C630.88 284.06 637.27 282.81 639.73 285.61 C642.18 288.42 641.20 294.48 641.20 301.12 C641.20 307.76 642.18 321.06 639.73 325.49 C637.27 329.92 630.63 327.70 626.45 327.70 C622.27 327.70 617.01 329.18 614.65 325.49 C612.29 321.79 612.54 311.97 612.29 305.55 C612.04 299.13 610.82 290.49 613.18 286.94Z" fill="#e4ecf6" stroke="#4d4426" stroke-width="1.5"/><path d="M677.70 305.55 C677.44 311.97 677.70 321.79 675.28 325.49 C672.86 329.18 667.48 327.70 663.20 327.70 C658.92 327.70 652.13 329.92 649.61 325.49 C647.09 321.06 648.10 307.76 648.10 301.12 C648.10 294.48 647.09 288.42 649.61 285.61 C652.13 282.81 658.67 284.06 663.20 284.29 C667.73 284.51 674.37 283.40 676.79 286.94 C679.21 290.49 677.95 299.13 677.70 305.55Z" fill="#f8f6e6" stroke="#4d4426" stroke-width="1.5"/><path d="M718.02 307.35 C717.74 313.51 718.02 322.93 715.31 326.48 C712.60 330.02 706.55 328.60 701.75 328.60 C696.95 328.60 689.32 330.73 686.50 326.48 C683.67 322.23 684.80 309.48 684.80 303.10 C684.80 296.73 683.67 290.92 686.50 288.23 C689.32 285.53 696.66 286.74 701.75 286.95 C706.84 287.16 714.29 286.10 717.00 289.50 C719.72 292.90 718.30 301.19 718.02 307.35Z" fill="#f8f6e6" stroke="#4d4426" stroke-width="1.5"/><path d="M759.54 317.85 C758.59 321.99 757.64 325.02 754.60 327.17 C751.56 329.33 745.10 330.37 741.30 330.80 C737.50 331.23 734.78 331.49 731.80 329.76 C728.82 328.04 725.02 324.58 723.44 320.44 C721.86 316.30 721.54 309.91 722.30 304.90 C723.06 299.89 725.59 293.85 728.00 290.40 C730.41 286.94 734.52 286.08 736.74 284.18 C738.96 282.28 739.46 279.17 741.30 279.00 C743.14 278.83 745.35 281.42 747.76 283.14 C750.17 284.87 753.65 286.17 755.74 289.36 C757.83 292.55 759.67 297.56 760.30 302.31 C760.93 307.06 760.49 313.71 759.54 317.85Z" fill="#f8f6e6" stroke="#4d4426" stroke-width="1.5"/><path d="M806.00 303.82 C806.00 308.40 804.12 317.33 802.78 321.54 C801.43 325.75 800.76 327.59 797.94 329.07 C795.12 330.55 790.22 330.55 785.85 330.40 C781.48 330.25 774.90 330.77 771.75 328.19 C768.59 325.60 767.85 319.69 766.91 314.89 C765.97 310.10 765.50 303.82 766.10 299.39 C766.71 294.96 767.92 290.53 770.54 288.31 C773.16 286.10 778.60 286.32 781.82 286.10 C785.04 285.88 786.39 285.66 789.88 286.99 C793.37 288.32 800.09 291.27 802.78 294.07 C805.46 296.88 806.00 299.24 806.00 303.82Z" fill="#f8f6e6" stroke="#4d4426" stroke-width="1.5"/><path d="M853.40 303.82 C853.40 308.40 851.33 317.33 849.85 321.54 C848.37 325.75 847.63 327.59 844.52 329.07 C841.41 330.55 836.01 330.55 831.20 330.40 C826.39 330.25 819.14 330.77 815.66 328.19 C812.18 325.60 811.37 319.69 810.33 314.89 C809.30 310.10 808.78 303.82 809.44 299.39 C810.11 294.96 811.44 290.53 814.33 288.31 C817.21 286.10 823.21 286.32 826.76 286.10 C830.31 285.88 831.79 285.66 835.64 286.99 C839.49 288.32 846.89 291.27 849.85 294.07 C852.81 296.88 853.40 299.24 853.40 303.82Z" fill="#f8f6e6" stroke="#4d4426" stroke-width="1.5"/><path d="M917.30 295.23 C918.00 299.03 917.10 303.68 916.09 308.94 C915.09 314.19 914.08 323.33 911.26 326.76 C908.44 330.19 903.21 329.42 899.18 329.50 C895.15 329.58 891.33 327.37 887.10 327.21 C882.87 327.06 877.64 328.97 873.81 328.59 C869.99 328.21 866.77 328.21 864.15 324.93 C861.53 321.65 859.22 313.89 858.11 308.94 C857.00 303.98 856.70 299.11 857.50 295.23 C858.31 291.34 860.22 287.08 862.94 285.63 C865.66 284.18 870.29 286.77 873.81 286.54 C877.34 286.31 880.86 284.10 884.08 284.26 C887.30 284.41 890.12 287.38 893.14 287.46 C896.16 287.53 899.08 284.94 902.20 284.71 C905.32 284.49 909.35 284.33 911.86 286.09 C914.38 287.84 916.60 291.42 917.30 295.23Z" fill="#f8f6e6" stroke="#4d4426" stroke-width="1.5"/><path d="M978.80 295.23 C979.49 299.03 978.60 303.68 977.62 308.94 C976.63 314.19 975.64 323.33 972.88 326.76 C970.12 330.19 964.99 329.42 961.04 329.50 C957.09 329.58 953.34 327.37 949.20 327.21 C945.06 327.06 939.93 328.97 936.18 328.59 C932.43 328.21 929.27 328.21 926.70 324.93 C924.14 321.65 921.87 313.89 920.78 308.94 C919.70 303.98 919.40 299.11 920.19 295.23 C920.98 291.34 922.86 287.08 925.52 285.63 C928.18 284.18 932.72 286.77 936.18 286.54 C939.63 286.31 943.08 284.10 946.24 284.26 C949.40 284.41 952.16 287.38 955.12 287.46 C958.08 287.53 960.94 284.94 964.00 284.71 C967.06 284.49 971.01 284.33 973.47 286.09 C975.94 287.84 978.11 291.42 978.80 295.23Z" fill="#f8f6e6" stroke="#4d4426" stroke-width="1.5"/><text x="285.8" y="254.9" text-anchor="middle" font-family="Liberation Serif" font-size="17" fill="#3b3522">18</text><text x="345.6" y="255.4" text-anchor="middle" font-family="Liberation Serif" font-size="17" fill="#3b3522">17</text><text x="405.3" y="255.2" text-anchor="middle" font-family="Liberation Serif" font-size="17" fill="#3b3522">16</text><text x="456.0" y="257.7" text-anchor="middle" font-family="Liberation Serif" font-size="17" fill="#3b3522">15</text><text x="496.0" y="255.7" text-anchor="middle" font-family="Liberation Serif" font-size="17" fill="#3b3522">14</text><text x="540.3" y="257.6" text-anchor="middle" font-family="Liberation Serif" font-size="17" fill="#3b3522">13</text><text x="581.9" y="256.7" text-anchor="middle" font-family="Liberation Serif" font-size="17" fill="#3b3522">12</text><text x="621.7" y="255.7" text-anchor="middle" font-family="Liberation Serif" font-size="17" fill="#3b3522">11</text><text x="665.3" y="256.7" text-anchor="middle" font-family="Liberation Serif" font-size="17" fill="#3b3522">21</text><text x="706.0" y="256.7" text-anchor="middle" font-family="Liberation Serif" font-size="17" fill="#3b3522">22</text><text x="746.7" y="257.6" text-anchor="middle" font-family="Liberation Serif" font-size="17" fill="#3b3522">23</text><text x="790.0" y="254.8" text-anchor="middle" font-family="Liberation Serif" font-size="17" fill="#3b3522">24</text><text x="829.9" y="257.6" text-anchor="middle" font-family="Liberation Serif" font-size="17" fill="#3b3522">25</text><text x="880.8" y="255.1" text-anchor="middle" font-family="Liberation Serif" font-size="17" fill="#3b3522">26</text><text x="940.2" y="255.1" text-anchor="middle" font-family="Liberation Serif" font-size="17" fill="#3b3522">27</text><text x="999.7" y="255.1" text-anchor="middle" font-family="Liberation Serif" font-size="17" fill="#3b3522">28</text><text x="280.4" y="311.9" text-anchor="middle" font-family="Liberation Serif" font-size="17" fill="#3b3522">48</text><text x="340.4" y="311.9" text-anchor="middle" font-family="Liberation Serif" font-size="17" fill="#3b3522">47</text><text x="400.1" y="311.9" text-anchor="middle" font-family="Liberation Serif" font-size="17" fill="#3b3522">46</text><text x="457.1" y="313.7" text-anchor="middle" font-family="Liberation Serif" font-size="17" fill="#3b3522">45</text><text x="503.2" y="313.7" text-anchor="middle" font-family="Liberation Serif" font-size="17" fill="#3b3522">44</text><text x="547.5" y="313.0" text-anchor="middle" font-family="Liberation Serif" font-size="17" fill="#3b3522">43</text><text x="586.4" y="311.0" text-anchor="middle" font-family="Liberation Serif" font-size="17" fill="#3b3522">42</text><text x="624.4" y="309.2" text-anchor="middle" font-family="Liberation Serif" font-size="17" fill="#3b3522">81</text><text x="663.5" y="309.2" text-anchor="middle" font-family="Liberation Serif" font-size="17" fill="#3b3522">31</text><text x="701.5" y="311.0" text-anchor="middle" font-family="Liberation Serif" font-size="17" fill="#3b3522">32</text><text x="740.4" y="312.2" text-anchor="middle" font-family="Liberation Serif" font-size="17" fill="#3b3522">33</text><text x="783.8" y="312.9" text-anchor="middle" font-family="Liberation Serif" font-size="17" fill="#3b3522">34</text><text x="828.0" y="312.9" text-anchor="middle" font-family="Liberation Serif" font-size="17" fill="#3b3522">35</text><text x="888.3" y="312.9" text-anchor="middle" font-family="Liberation Serif" font-size="17" fill="#3b3522">36</text><text x="948.6" y="311.9" text-anchor="middle" font-family="Liberation Serif" font-size="17" fill="#3b3522">37</text><text x="1006.4" y="311" text-anchor="middle" font-family="Liberation Serif" font-size="17" fill="#3b3522">38</text><circle cx="302.4" cy="267.0" r="12.7" fill="#f10000"/><text x="302.4" y="272.6" text-anchor="middle" font-family="Liberation Serif" font-size="16" fill="#fff">2</text><circle cx="362.6" cy="267.0" r="12.7" fill="#f10000"/><text x="362.6" y="272.6" text-anchor="middle" font-family="Liberation Serif" font-size="16" fill="#fff">2</text><circle cx="422.0" cy="267.0" r="12.7" fill="#f10000"/><text x="422.0" y="272.6" text-anchor="middle" font-family="Liberation Serif" font-size="16" fill="#fff">2</text><circle cx="472.5" cy="269.4" r="12.7" fill="#f10000"/><text x="472.5" y="275.0" text-anchor="middle" font-family="Liberation Serif" font-size="16" fill="#fff">1</text><circle cx="512.3" cy="267.5" r="12.7" fill="#f10000"/><text x="512.3" y="273.1" text-anchor="middle" font-family="Liberation Serif" font-size="16" fill="#fff">1</text><circle cx="557.5" cy="269.6" r="12.7" fill="#f10000"/><text x="557.5" y="275.2" text-anchor="middle" font-family="Liberation Serif" font-size="16" fill="#fff">1</text><circle cx="598.0" cy="269.1" r="12.7" fill="#f10000"/><text x="598.0" y="274.7" text-anchor="middle" font-family="Liberation Serif" font-size="16" fill="#fff">2</text><circle cx="639.3" cy="268.3" r="12.7" fill="#f10000"/><text x="639.3" y="273.9" text-anchor="middle" font-family="Liberation Serif" font-size="16" fill="#fff">1</text><circle cx="682.5" cy="268.3" r="12.7" fill="#f10000"/><text x="682.5" y="273.9" text-anchor="middle" font-family="Liberation Serif" font-size="16" fill="#fff">1</text><circle cx="722.3" cy="268.6" r="12.7" fill="#f10000"/><text x="722.3" y="274.2" text-anchor="middle" font-family="Liberation Serif" font-size="16" fill="#fff">1</text><circle cx="764.4" cy="269.2" r="12.7" fill="#f10000"/><text x="764.4" y="274.8" text-anchor="middle" font-family="Liberation Serif" font-size="16" fill="#fff">1</text><circle cx="807.9" cy="266.0" r="12.7" fill="#f10000"/><text x="807.9" y="271.6" text-anchor="middle" font-family="Liberation Serif" font-size="16" fill="#fff">1</text><circle cx="847.6" cy="269.6" r="12.7" fill="#f10000"/><text x="847.6" y="275.2" text-anchor="middle" font-family="Liberation Serif" font-size="16" fill="#fff">1</text><circle cx="897.8" cy="266.5" r="12.7" fill="#f10000"/><text x="897.8" y="272.1" text-anchor="middle" font-family="Liberation Serif" font-size="16" fill="#fff">2</text><circle cx="957.9" cy="266.5" r="12.7" fill="#f10000"/><text x="957.9" y="272.1" text-anchor="middle" font-family="Liberation Serif" font-size="16" fill="#fff">2</text><circle cx="1017.3" cy="266.5" r="12.7" fill="#f10000"/><text x="1017.3" y="272.1" text-anchor="middle" font-family="Liberation Serif" font-size="16" fill="#fff">2</text><circle cx="297.7" cy="322.9" r="12.7" fill="#f10000"/><text x="297.7" y="328.5" text-anchor="middle" font-family="Liberation Serif" font-size="16" fill="#fff">1</text><circle cx="357.9" cy="322.9" r="12.7" fill="#f10000"/><text x="357.9" y="328.5" text-anchor="middle" font-family="Liberation Serif" font-size="16" fill="#fff">2</text><circle cx="417.1" cy="322.9" r="12.7" fill="#f10000"/><text x="417.1" y="328.5" text-anchor="middle" font-family="Liberation Serif" font-size="16" fill="#fff">3</text><circle cx="475.0" cy="324.2" r="12.7" fill="#f10000"/><text x="475.0" y="329.8" text-anchor="middle" font-family="Liberation Serif" font-size="16" fill="#fff">2</text><circle cx="521.0" cy="324.0" r="12.7" fill="#f10000"/><text x="521.0" y="329.6" text-anchor="middle" font-family="Liberation Serif" font-size="16" fill="#fff">3</text><circle cx="565.0" cy="324.3" r="12.7" fill="#f10000"/><text x="565.0" y="329.9" text-anchor="middle" font-family="Liberation Serif" font-size="16" fill="#fff">4</text><circle cx="604.2" cy="321.8" r="12.7" fill="#f10000"/><text x="604.2" y="327.4" text-anchor="middle" font-family="Liberation Serif" font-size="16" fill="#fff">2</text><circle cx="643.2" cy="320.0" r="12.7" fill="#f10000"/><text x="643.2" y="325.6" text-anchor="middle" font-family="Liberation Serif" font-size="16" fill="#fff">2</text><circle cx="681.4" cy="320.5" r="12.7" fill="#f10000"/><text x="681.4" y="326.1" text-anchor="middle" font-family="Liberation Serif" font-size="16" fill="#fff">3</text><circle cx="719.2" cy="322.3" r="12.7" fill="#f10000"/><text x="719.2" y="327.9" text-anchor="middle" font-family="Liberation Serif" font-size="16" fill="#fff">2</text><circle cx="757.7" cy="324.8" r="12.7" fill="#f10000"/><text x="757.7" y="330.4" text-anchor="middle" font-family="Liberation Serif" font-size="16" fill="#fff">3</text><circle cx="801.9" cy="324.2" r="12.7" fill="#f10000"/><text x="801.9" y="329.8" text-anchor="middle" font-family="Liberation Serif" font-size="16" fill="#fff">2</text><circle cx="846.5" cy="324.7" r="12.7" fill="#f10000"/><text x="846.5" y="330.3" text-anchor="middle" font-family="Liberation Serif" font-size="16" fill="#fff">2</text><circle cx="905.7" cy="323.9" r="12.7" fill="#f10000"/><text x="905.7" y="329.5" text-anchor="middle" font-family="Liberation Serif" font-size="16" fill="#fff">3</text><circle cx="966.1" cy="322.9" r="12.7" fill="#f10000"/><text x="966.1" y="328.5" text-anchor="middle" font-family="Liberation Serif" font-size="16" fill="#fff">2</text><circle cx="1057" cy="249.5" r="17" fill="#96b8ec" stroke="#111" stroke-width="1.4"/><path d="M1051.7 238 Q1057 236.2 1063.1 237.4 Q1067 241 1066.4 248 Q1066 254 1064 256.5 Q1060.5 260.3 1057 262 L1054.5 258.8 Q1052.8 258.2 1051.5 257.5 Q1047.5 254 1047.7 248 Q1047.7 241 1051.7 238Z" fill="#fff" stroke="#111" stroke-width="1.9" stroke-linejoin="round"/><path d="M1099.2 238.7 Q1102 237.6 1105.2 238 Q1111 239.5 1112.5 245.4 Q1113.3 250 1112.6 252 Q1111.5 255.5 1110.5 256.7 Q1107 260.3 1102.5 261.4 L1099.5 258.2" fill="none" stroke="#111" stroke-width="1.6" stroke-linejoin="round"/><path d="M1086.5 238.7 Q1089 237.2 1091.8 237.4 Q1099 238.3 1101.2 244.7 Q1102.2 248 1101.8 250 Q1101.3 254.5 1099.2 257.4 Q1096 260.5 1091.8 261.4 L1088.5 258 Q1085.5 257.3 1083.8 256 Q1081.7 253 1081.8 249.4 Q1081.9 246.5 1083.1 244 Z" fill="#fff" stroke="#111" stroke-width="1.6" stroke-linejoin="round"/></svg>
<div class="t " style="left:121.0px;top:349.1px;font-size:11px;color:#4a7ab4;text-decoration:underline;text-underline-offset:2px;text-decoration-color:#93aac6">Незаконченные планы лечения и наряд-заказы (4)</div>
<svg class="r" style="left:124.0px;top:371.0px" width="18" height="18" viewBox="0 0 18 18"><circle cx="8.5" cy="8.5" r="7.6" fill="none" stroke="#1f6fc5" stroke-width="1.6"/><path d="M8.5 4.4V12.6M4.4 8.5H12.6" stroke="#1f6fc5" stroke-width="1.7"/></svg>
<div class="t " style="left:146.0px;top:374.1px;font-size:11px;color:#404040;">Добавить</div>
<svg class="r" style="left:200.0px;top:364.0px" width="30" height="30" viewBox="0 0 30 30"><path d="M9.2 18.9V9 Q9.2 7.2 11 7.2 H19.9" fill="none" stroke="#333" stroke-width="1.6"/><rect x="12.3" y="9.8" width="12.2" height="14.2" rx="1.4" fill="none" stroke="#333" stroke-width="1.7"/></svg>
<svg class="r" style="left:200.0px;top:364.0px" width="60" height="30" viewBox="0 0 60 30"><path d="M43.4 9.3H55.8" stroke="#333" stroke-width="1.5"/><path d="M47.5 9.2V8.2H51.5V9.2" fill="none" stroke="#333" stroke-width="1.2"/><path d="M44.3 9.8H54.9L54.3 21.4Q54.2 22.4 53.2 22.4H46Q45 22.4 44.9 21.4Z" fill="none" stroke="#333" stroke-width="1.6"/><path d="M48.1 12.8V19.4M51.1 12.8V19.4" stroke="#333" stroke-width="1.4"/></svg>
<svg class="r" style="left:275.0px;top:372.0px" width="15" height="15" viewBox="0 0 15 15"><rect x="0.8" y="0.8" width="13.4" height="13.4" rx="1.2" fill="none" stroke="#333" stroke-width="1.6"/><path d="M3.6 9.2L7.5 5.4L11.4 9.2" fill="none" stroke="#333" stroke-width="1.5"/></svg>
<svg class="r" style="left:307.2px;top:372.0px" width="15" height="15" viewBox="0 0 15 15"><rect x="0.8" y="0.8" width="13.4" height="13.4" rx="1.2" fill="none" stroke="#333" stroke-width="1.6"/><path d="M3.6 5.6L7.5 9.4L11.4 5.6" fill="none" stroke="#333" stroke-width="1.5"/></svg>
<div class="t " style="left:348.4px;top:374.1px;font-size:11px;color:#404040;">Добавить рекламацию</div>
<svg class="r" style="left:478.0px;top:364.0px" width="30" height="30" viewBox="0 0 30 30"><path d="M7.5 7.6 L9.3 8.4 L12.3 18.3 H21.6" fill="none" stroke="#333" stroke-width="1.6" stroke-linejoin="round"/><path d="M22.4 9.2 L19.2 15.8 H11.2" fill="none" stroke="#333" stroke-width="1.6" stroke-linejoin="round"/><circle cx="11.5" cy="22" r="1.5" fill="#333"/><circle cx="20.2" cy="22" r="1.5" fill="#333"/><path d="M15.9 6.4V12.4M12.9 9.6H18.9" stroke="#333" stroke-width="1.6"/></svg>
<div class="t " style="left:507.7px;top:374.1px;font-size:11px;color:#404040;">Подбор</div>
<svg class="r" style="left:565.5px;top:374.5px" width="13" height="10" viewBox="0 0 13 10"><path d="M1.8 0.8H11.2Q12.2 0.8 12.2 1.8V3.4Q10.8 3.6 10.8 5Q10.8 6.4 12.2 6.6V8.2Q12.2 9.2 11.2 9.2H1.8Q0.8 9.2 0.8 8.2V6.6Q2.2 6.4 2.2 5Q2.2 3.6 0.8 3.4V1.8Q0.8 0.8 1.8 0.8Z" fill="none" stroke="#333" stroke-width="1.6"/><path d="M4.5 3L8.5 7M8.5 3L4.5 7" stroke="#333" stroke-width="1.1"/></svg>
<div class="t " style="left:581.6px;top:374.1px;font-size:11px;color:#404040;">Промокод</div>
<svg class="r" style="left:652.5px;top:373.5px" width="20" height="12" viewBox="0 0 20 12"><path d="M0 1.5H12M0 5.8H12M0 10.1H12" stroke="#444" stroke-width="1.6"/><path d="M16.2 5.3H20L18.1 7.3Z" fill="#444"/></svg>
<div class="r" style="left:1077.5px;top:369.8px;width:174.0px;height:19.6px;border:1px solid #cfcfcf;background:#fff;border-radius:2px"></div>
<div class="t " style="left:1080.5px;top:374.1px;font-size:10.8px;color:#a0a0a0;">Поиск (Ctrl+F)</div>
<div class="r" style="left:1232.5px;top:371.5px;width:1.0px;height:17.0px;background:#d8d8d8"></div>
<svg class="r" style="left:1238.5px;top:375.8px" width="7" height="7" viewBox="0 0 7 7"><path d="M0.6 0.6L6.4 6.4M6.4 0.6L0.6 6.4" stroke="#444" stroke-width="1.2"/></svg>
<div class="r" style="left:121.0px;top:397.0px;width:1131.0px;height:199.5px;border:1px solid #c4c4c4;background:#fff"></div>
<div class="r" style="left:122.0px;top:422.0px;width:1129.0px;height:21.0px;background:#e7eff9"></div>
<div class="r" style="left:122.0px;top:422.0px;width:29.5px;height:21.0px;background:#d6e4f5"></div>
<div class="r" style="left:122.0px;top:420.5px;width:1129.0px;height:1.0px;background:#dadada"></div>
<div class="r" style="left:122.0px;top:442.5px;width:1129.0px;height:1.0px;background:#e6e6e6"></div>
<div class="r" style="left:122.0px;top:465.5px;width:1129.0px;height:1.0px;background:#e6e6e6"></div>
<div class="r" style="left:122.0px;top:488.2px;width:1129.0px;height:1.0px;background:#e6e6e6"></div>
<div class="r" style="left:122.0px;top:510.5px;width:1129.0px;height:1.0px;background:#e6e6e6"></div>
<div class="r" style="left:151.4px;top:398.0px;width:1.0px;height:22.5px;background:#e0e0e0"></div>
<div class="r" style="left:151.4px;top:422.0px;width:1.0px;height:89.0px;background:#f1f1f1"></div>
<div class="r" style="left:218.5px;top:398.0px;width:1.0px;height:22.5px;background:#e0e0e0"></div>
<div class="r" style="left:218.5px;top:422.0px;width:1.0px;height:89.0px;background:#f1f1f1"></div>
<div class="r" style="left:282.6px;top:398.0px;width:1.0px;height:22.5px;background:#e0e0e0"></div>
<div class="r" style="left:282.6px;top:422.0px;width:1.0px;height:89.0px;background:#f1f1f1"></div>
<div class="r" style="left:412.4px;top:398.0px;width:1.0px;height:22.5px;background:#e0e0e0"></div>
<div class="r" style="left:412.4px;top:422.0px;width:1.0px;height:89.0px;background:#f1f1f1"></div>
<div class="r" style="left:483.0px;top:398.0px;width:1.0px;height:22.5px;background:#e0e0e0"></div>
<div class="r" style="left:483.0px;top:422.0px;width:1.0px;height:89.0px;background:#f1f1f1"></div>
<div class="r" style="left:555.5px;top:398.0px;width:1.0px;height:22.5px;background:#e0e0e0"></div>
<div class="r" style="left:555.5px;top:422.0px;width:1.0px;height:89.0px;background:#f1f1f1"></div>
<div class="r" style="left:611.8px;top:398.0px;width:1.0px;height:22.5px;background:#e0e0e0"></div>
<div class="r" style="left:611.8px;top:422.0px;width:1.0px;height:89.0px;background:#f1f1f1"></div>
<div class="r" style="left:692.5px;top:398.0px;width:1.0px;height:22.5px;background:#e0e0e0"></div>
<div class="r" style="left:692.5px;top:422.0px;width:1.0px;height:89.0px;background:#f1f1f1"></div>
<div class="r" style="left:755.4px;top:398.0px;width:1.0px;height:22.5px;background:#e0e0e0"></div>
<div class="r" style="left:755.4px;top:422.0px;width:1.0px;height:89.0px;background:#f1f1f1"></div>
<div class="r" style="left:819.6px;top:398.0px;width:1.0px;height:22.5px;background:#e0e0e0"></div>
<div class="r" style="left:819.6px;top:422.0px;width:1.0px;height:89.0px;background:#f1f1f1"></div>
<div class="r" style="left:900.0px;top:398.0px;width:1.0px;height:22.5px;background:#e0e0e0"></div>
<div class="r" style="left:900.0px;top:422.0px;width:1.0px;height:89.0px;background:#f1f1f1"></div>
<div class="r" style="left:980.4px;top:398.0px;width:1.0px;height:22.5px;background:#e0e0e0"></div>
<div class="r" style="left:980.4px;top:422.0px;width:1.0px;height:89.0px;background:#f1f1f1"></div>
<div class="r" style="left:1060.6px;top:398.0px;width:1.0px;height:22.5px;background:#e0e0e0"></div>
<div class="r" style="left:1060.6px;top:422.0px;width:1.0px;height:89.0px;background:#f1f1f1"></div>
<div class="r" style="left:1190.6px;top:398.0px;width:1.0px;height:22.5px;background:#e0e0e0"></div>
<div class="r" style="left:1190.6px;top:422.0px;width:1.0px;height:89.0px;background:#f1f1f1"></div>
<div class="t " style="left:128.3px;top:404.1px;font-size:11px;color:#404040;">N</div>
<div class="t " style="left:158.3px;top:404.1px;font-size:11px;color:#404040;">Зуб</div>
<div class="t " style="left:225.0px;top:404.1px;font-size:11px;color:#404040;">Артикул</div>
<div class="t " style="left:289.9px;top:404.1px;font-size:11px;color:#404040;">Услуга</div>
<div class="t " style="left:419.6px;top:404.1px;font-size:11px;color:#404040;">Код услуги</div>
<div class="t " style="left:490.0px;top:404.1px;font-size:11px;color:#404040;">Кол-во</div>
<div class="t " style="left:563.0px;top:404.1px;font-size:11px;color:#404040;">УЕТ</div>
<div class="t " style="left:618.9px;top:404.1px;font-size:11px;color:#404040;">Цена</div>
<div class="t " style="left:699.6px;top:404.1px;font-size:11px;color:#404040;">Скидка %</div>
<div class="t " style="left:762.5px;top:404.1px;font-size:11px;color:#404040;">Σ руч.</div>
<div class="t " style="left:827.0px;top:404.1px;font-size:11px;color:#404040;">Σ авто</div>
<div class="t " style="left:906.9px;top:404.1px;font-size:11px;color:#404040;">Сумма</div>
<div class="t " style="left:987.5px;top:404.1px;font-size:11px;color:#404040;">Всего</div>
<div class="t " style="left:1068.0px;top:404.1px;font-size:11px;color:#404040;">Помещение</div>
<div class="t" style="left:1197.9px;top:404.1px;font-size:11px;color:#404040;width:53px;overflow:hidden">Материалы</div>
<div class="t" style="right:1127.5px;top:427.2px;font-size:11px;color:#404040;">1</div>
<div class="t " style="left:158.3px;top:427.2px;font-size:11px;color:#404040;">46</div>
<div class="t " style="left:225.0px;top:427.2px;font-size:11px;color:#404040;">331</div>
<div class="t " style="left:289.9px;top:427.2px;font-size:11px;color:#404040;">Инфильтрационная …</div>
<div class="t" style="right:796.0px;top:427.2px;font-size:11px;color:#404040;">01</div>
<div class="t" style="right:722.5px;top:427.2px;font-size:11px;color:#404040;">1,00</div>
<div class="t" style="right:586.0px;top:427.2px;font-size:11px;color:#404040;">600,00</div>
<div class="t" style="right:298.0px;top:427.2px;font-size:11px;color:#404040;">600,00</div>
<div class="t" style="right:217.5px;top:427.2px;font-size:11px;color:#404040;">600,00</div>
<div class="t" style="left:1198px;top:427.2px;font-size:11px;color:#8c8866;text-decoration:underline;text-underline-offset:2px;width:53px;height:14px;overflow:hidden">Не выбр…</div>
<div class="t" style="right:1127.5px;top:449.4px;font-size:11px;color:#404040;">2</div>
<div class="t " style="left:158.3px;top:449.4px;font-size:11px;color:#404040;">46</div>
<div class="t " style="left:225.0px;top:449.4px;font-size:11px;color:#404040;">371</div>
<div class="t " style="left:289.9px;top:449.4px;font-size:11px;color:#404040;">Восстановление зуб…</div>
<div class="t" style="right:722.5px;top:449.4px;font-size:11px;color:#404040;">1,00</div>
<div class="t" style="right:586.0px;top:449.4px;font-size:11px;color:#404040;">2 010,00</div>
<div class="t" style="right:298.0px;top:449.4px;font-size:11px;color:#404040;">2 010,00</div>
<div class="t" style="right:217.5px;top:449.4px;font-size:11px;color:#404040;">2 010,00</div>
<div class="t" style="left:1198px;top:449.4px;font-size:11px;color:#8c8866;text-decoration:underline;text-underline-offset:2px;width:53px;height:14px;overflow:hidden">пломбир…</div>
<div class="t" style="right:1127.5px;top:472.3px;font-size:11px;color:#404040;">3</div>
<div class="t " style="left:158.3px;top:472.3px;font-size:11px;color:#404040;">46</div>
<div class="t " style="left:225.0px;top:472.3px;font-size:11px;color:#404040;">404</div>
<div class="t " style="left:289.9px;top:472.3px;font-size:11px;color:#404040;">Временное пломбир…</div>
<div class="t" style="right:722.5px;top:472.3px;font-size:11px;color:#404040;">1,00</div>
<div class="t" style="right:586.0px;top:472.3px;font-size:11px;color:#404040;">2 300,00</div>
<div class="t" style="right:298.0px;top:472.3px;font-size:11px;color:#404040;">2 300,00</div>
<div class="t" style="right:217.5px;top:472.3px;font-size:11px;color:#404040;">2 300,00</div>
<div class="t" style="left:1198px;top:472.3px;font-size:11px;color:#8c8866;text-decoration:underline;text-underline-offset:2px;width:53px;height:14px;overflow:hidden">Не выбр…</div>
<div class="t" style="right:1127.5px;top:494.8px;font-size:11px;color:#404040;">4</div>
<div class="t " style="left:158.3px;top:494.8px;font-size:11px;color:#404040;">46</div>
<div class="t " style="left:225.0px;top:494.8px;font-size:11px;color:#404040;">211</div>
<div class="t " style="left:289.9px;top:494.8px;font-size:11px;color:#404040;">препарирование кар…</div>
<div class="t" style="right:796.0px;top:494.8px;font-size:11px;color:#404040;">02</div>
<div class="t" style="right:722.5px;top:494.8px;font-size:11px;color:#404040;">1,00</div>
<div class="t" style="right:586.0px;top:494.8px;font-size:11px;color:#404040;">700,00</div>
<div class="t" style="right:298.0px;top:494.8px;font-size:11px;color:#404040;">700,00</div>
<div class="t" style="right:217.5px;top:494.8px;font-size:11px;color:#404040;">700,00</div>
<div class="t" style="left:1198px;top:494.8px;font-size:11px;color:#8c8866;text-decoration:underline;text-underline-offset:2px;width:53px;height:14px;overflow:hidden">Укрепите…</div>
<div class="r" style="left:139.8px;top:586.5px;width:1091.5px;height:6.0px;background:#d6d6d6;border-radius:3px"></div>
<div class="r" style="left:139.8px;top:586.5px;width:868.0px;height:6.0px;background:#9a9a9a;border-radius:3px"></div>
<svg class="r" style="left:128.5px;top:587.5px" width="4" height="5" viewBox="0 0 4 5"><path d="M3.5 0L0 2.5L3.5 5Z" fill="#b0b0b0"/></svg>
<svg class="r" style="left:1240.0px;top:587.5px" width="4" height="5" viewBox="0 0 4 5"><path d="M0 0L3.5 2.5L0 5Z" fill="#333"/></svg>
<div class="t " style="left:873.9px;top:609.6px;font-size:13px;color:#404040;">Скидка:</div>
<div class="r" style="left:926.3px;top:603.2px;width:132.0px;height:25.0px;border:1px solid #d8d8d8;background:#fff;border-radius:2px"></div>
<div class="t" style="right:216.3px;top:609.6px;font-size:13px;color:#222;">0,00</div>
<div class="t " style="left:1067.3px;top:609.6px;font-size:13px;color:#404040;">Сумма:</div>
<div class="r" style="left:1118.7px;top:603.2px;width:133.0px;height:25.0px;border:1px solid #d8d8d8;background:#fff;border-radius:2px"></div>
<div class="t" style="right:22.7px;top:609.6px;font-size:13px;color:#222;">5 610,00</div>
<svg class="r" style="left:125.5px;top:642.5px" width="15" height="16" viewBox="0 0 15 16"><path d="M0.5 2.6H14.5" stroke="#333" stroke-width="1.5"/><path d="M5 2.4V0.9H10V2.4" fill="none" stroke="#333" stroke-width="1.3"/><path d="M2.3 4.2H12.7V15H2.3Z" fill="none" stroke="#333" stroke-width="1.6"/><path d="M6 6.3V12.8M9 6.3V12.8" stroke="#333" stroke-width="1.3"/></svg>
<svg class="r" style="left:164.0px;top:642.0px" width="18" height="17" viewBox="0 0 18 17"><path d="M4.3 4.5 A6.6 6.6 0 1 1 3.1 10.3" fill="none" stroke="#333" stroke-width="1.7"/><path d="M0.8 3.3 L6 3.3 L5.4 8.2Z" fill="#333"/><path d="M10 5V9.3L12.6 11.4" fill="none" stroke="#333" stroke-width="1.6"/></svg>
<svg class="r" style="left:204.0px;top:645.0px" width="21" height="11" viewBox="0 0 21 11"><path d="M0 1H12M0 5.2H12M0 9.6H12" stroke="#444" stroke-width="1.6"/><path d="M16.2 5H20L18.1 7Z" fill="#444"/></svg>
<svg class="r" style="left:429.4px;top:633.8px" width="30" height="28" viewBox="0 0 30 28"><path d="M15.2 23.2 Q13.5 25.3 11.1 25 Q6 24.6 5.8 19.2 Q5.8 16.2 6.7 14.2 L9.8 6.8 Q10.7 5 12 6.4 L16 9.4 L19.6 6.4 Q20.9 5 21.8 6.8 L26.3 15.6" fill="none" stroke="#5a1ee8" stroke-width="2.5" stroke-linejoin="round" stroke-linecap="round"/><path d="M7.6 13.3 L16 9.4 L26.3 15.6" fill="none" stroke="#5a1ee8" stroke-width="2.5" stroke-linejoin="round" stroke-linecap="round"/><path d="M10.6 18.3 Q12.3 16.9 14.2 18" fill="none" stroke="#5a1ee8" stroke-width="1.3" stroke-linecap="round"/><path d="M17.6 21.2 L21.6 17.6 L25.6 21.2 H23.2 V25.4 H20 V21.2Z" fill="#5a1ee8"/></svg>
<div class="t " style="left:461.5px;top:644.1px;font-size:11px;color:#404040;">Загрузить снимки</div>
<svg class="r" style="left:569.1px;top:633.8px" width="30" height="28" viewBox="0 0 30 28"><path d="M15.2 23.2 Q13.5 25.3 11.1 25 Q6 24.6 5.8 19.2 Q5.8 16.2 6.7 14.2 L9.8 6.8 Q10.7 5 12 6.4 L16 9.4 L19.6 6.4 Q20.9 5 21.8 6.8 L26.3 15.6" fill="none" stroke="#5a1ee8" stroke-width="2.5" stroke-linejoin="round" stroke-linecap="round"/><path d="M7.6 13.3 L16 9.4 L26.3 15.6" fill="none" stroke="#5a1ee8" stroke-width="2.5" stroke-linejoin="round" stroke-linecap="round"/><path d="M10.6 18.3 Q12.3 16.9 14.2 18" fill="none" stroke="#5a1ee8" stroke-width="1.3" stroke-linecap="round"/><g fill="none" stroke="#8a62ee" stroke-width="1.4" transform="rotate(-45 21.8 21.4)"><rect x="16.6" y="19.6" width="6.2" height="3.6" rx="1.8"/><rect x="20.8" y="19.6" width="6.2" height="3.6" rx="1.8"/></g></svg>
<div class="t " style="left:601.9px;top:644.1px;font-size:11px;color:#404040;">Обследование</div>
<svg class="r" style="left:693.6px;top:633.8px" width="30" height="28" viewBox="0 0 30 28"><path d="M15.2 23.2 Q13.5 25.3 11.1 25 Q6 24.6 5.8 19.2 Q5.8 16.2 6.7 14.2 L9.8 6.8 Q10.7 5 12 6.4 L16 9.4 L19.6 6.4 Q20.9 5 21.8 6.8 L26.3 15.6" fill="none" stroke="#5a1ee8" stroke-width="2.5" stroke-linejoin="round" stroke-linecap="round"/><path d="M7.6 13.3 L16 9.4 L26.3 15.6" fill="none" stroke="#5a1ee8" stroke-width="2.5" stroke-linejoin="round" stroke-linecap="round"/><path d="M10.6 18.3 Q12.3 16.9 14.2 18" fill="none" stroke="#5a1ee8" stroke-width="1.3" stroke-linecap="round"/><path d="M18 18.6 Q20 17.4 21.7 18.5 Q23.4 17.4 25.4 18.6 Q26.4 20.6 25 23 L24.3 26.2 Q23.8 27 23.3 26 L21.7 23.4 L20.1 26 Q19.6 27 19.1 26.2 L18.4 23 Q17 20.6 18 18.6Z" fill="#fff" stroke="#8a62ee" stroke-width="1.2"/></svg>
<div class="t " style="left:726.4px;top:644.1px;font-size:11px;color:#404040;">Зубная формула</div>
<svg class="r" style="left:834.0px;top:641.5px" width="17" height="16" viewBox="0 0 17 16"><rect x="3.5" y="0.8" width="10" height="3.6" fill="none" stroke="#333" stroke-width="1.5"/><path d="M3.3 11.8H1V4.4H16V11.8H13.7" fill="none" stroke="#333" stroke-width="1.7" stroke-linejoin="round"/><rect x="4" y="8.5" width="9" height="6.6" fill="#fff" stroke="#333" stroke-width="1.5"/></svg>
<div class="t " style="left:855.8px;top:644.1px;font-size:11px;color:#404040;">Печать</div>
<div class="r" style="left:909.7px;top:639.0px;width:90.5px;height:21.5px;background:#efefef"></div>
<div class="t" style="left:855.0px;width:200px;text-align:center;top:644.1px;font-size:11px;color:#555;">Оплатить</div>
<div class="r" style="left:1016.6px;top:639.0px;width:127.7px;height:21.5px;background:#efefef"></div>
<div class="t" style="left:980.5px;width:200px;text-align:center;top:644.1px;font-size:11px;color:#1f5fb0;font-weight:bold">Продолжает лечение</div>
<div class="r" style="left:1160.9px;top:639.0px;width:90.6px;height:21.5px;background:#1d6ccc"></div>
<div class="t" style="left:1106.2px;width:200px;text-align:center;top:644.1px;font-size:11px;color:#fff;font-weight:bold">Сохранить</div>
</body></html>
